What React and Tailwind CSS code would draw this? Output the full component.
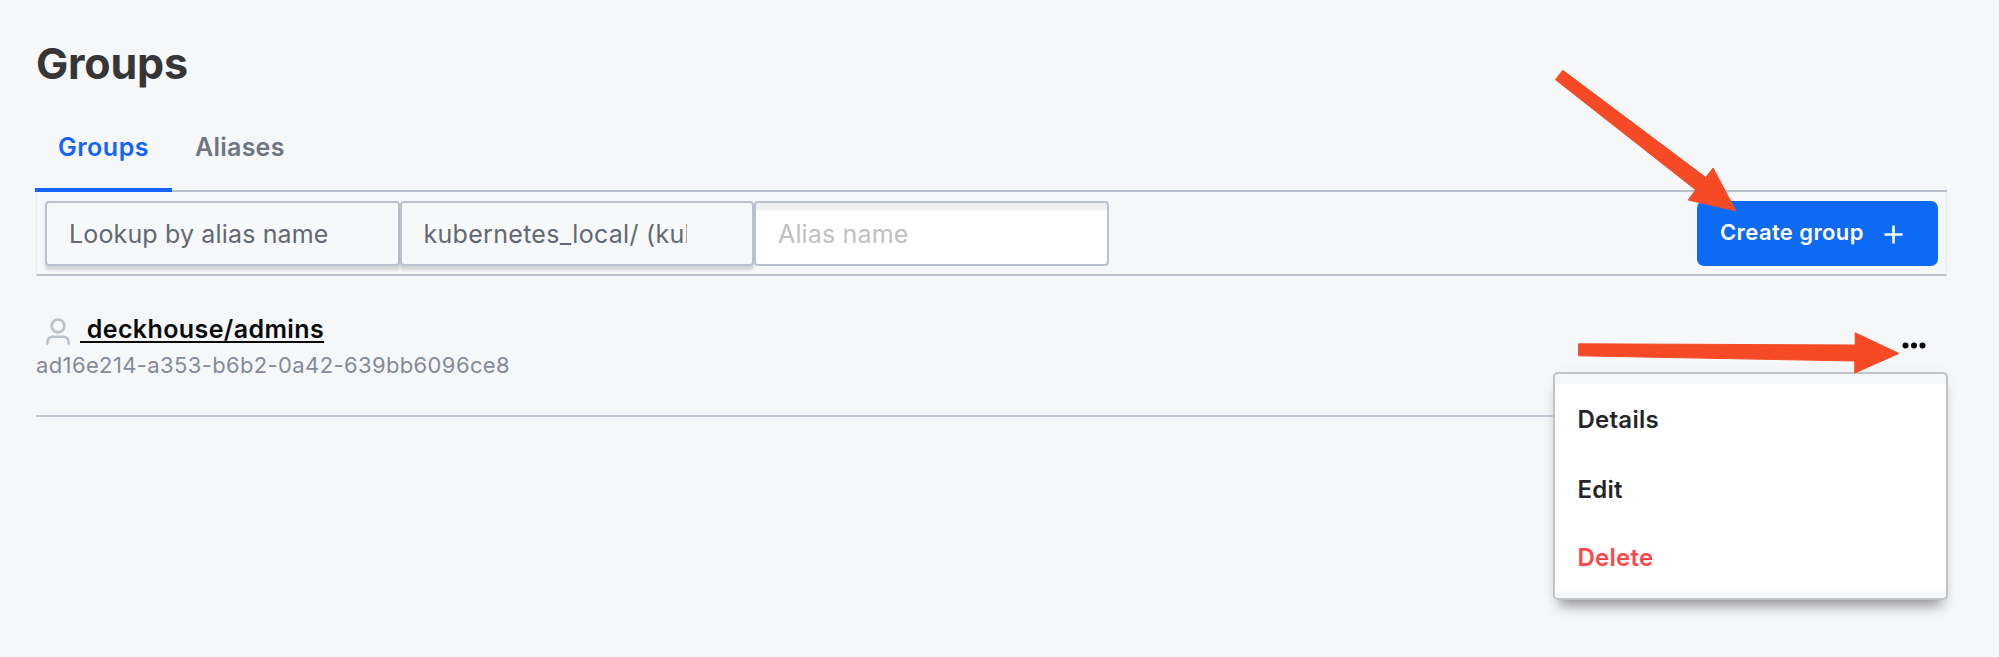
const inputBox =
  "flex h-[65px] w-[354.5px] items-center rounded-[4px] border-2 border-[#bac1cc] px-[22px] pt-[1px] text-[25px] leading-[36px]";

const menuItems = [
  { label: "Details", style: "h-[72px] text-[#25262b]" },
  { label: "Edit", style: "h-[68px] text-[#25262b]" },
  { label: "Delete", style: "h-[68px] text-[#ff4747]" },
];

function UserIcon() {
  return (
    <svg className="ml-[1px] mt-[7px] h-[27px] w-[26px] shrink-0" viewBox="0 0 26 27" fill="none" stroke="#bac1cc" strokeWidth="2.6" strokeLinecap="round">
      <circle cx="13" cy="8" r="6.4" />
      <path d="M2.4 25.6v-1.8a5 5 0 0 1 5-5h11.2a5 5 0 0 1 5 5v1.8" />
    </svg>
  );
}

function Arrows() {
  return (
    <svg className="pointer-events-none absolute left-0 top-0 h-[657px] w-[1999px]" viewBox="0 0 1999 657" fill="#f54a25" stroke="#f54a25" strokeWidth="1" strokeLinejoin="round">
      <path d="M1562.8 70.3 1555.5 79.7 1695.6 189.8 1688.3 200.1 1735.8 210.8 1713.1 168 1705.8 177.4Z" />
      <path d="M1578.6 343.8V355.8L1854.8 361V373L1898.8 353.4 1855.2 332.8V345Z" />
    </svg>
  );
}

export default function App() {
  return (
    <div className="relative h-[657px] w-[1999px] overflow-hidden bg-[#f6f7f9] pl-[36px] pr-[52px] pt-[35px] font-['Inter',sans-serif]">
      <h1 className="h-[71px] text-[43px] font-bold leading-[56px] tracking-[-0.2px] text-[#363636]">Groups</h1>

      <nav className="flex h-[86px] border-b-2 border-[#bac1cc] text-[25px] font-semibold">
        <a className="-mb-[2px] -ml-px flex w-[137px] items-center justify-center border-b-4 border-[#1563ff] pt-[2px] tracking-[0.5px] text-[#1563ff]">Groups</a>
        <a className="-mb-[2px] flex items-center border-b-4 border-transparent pl-[23px] pt-[2px] tracking-[0.25px] text-[#6f7682]">Aliases</a>
      </nav>

      <div className="flex h-[84px] items-start justify-between border-b-2 border-l border-r border-b-[#bac1cc] border-l-[#ebecef] border-r-[#ebecef] pl-[8px] pr-[8px] pt-[9px]">
        <div className="flex">
          <div className={`${inputBox} bg-[#f7f8fa] text-[#636872] shadow-[0_4px_3px_rgba(0,0,0,0.14)]`}>
            <span className="whitespace-nowrap tracking-[0.15px]">Lookup by alias name</span>
          </div>
          <div className={`${inputBox} bg-[#f7f8fa] text-[#636872] shadow-[0_4px_3px_rgba(0,0,0,0.14)]`}>
            <span className="w-[263px] overflow-hidden whitespace-nowrap tracking-[0.3px]">kubernetes_local/ (kubernetes)</span>
          </div>
          <div className={`${inputBox} bg-white text-[#c0c0c0] shadow-[inset_0_7px_0_#f0f0f0]`}>
            <span className="tracking-[0.15px]">Alias name</span>
          </div>
        </div>
        <button className="flex h-[65px] w-[241px] items-center justify-between rounded-[7px] bg-[#0d6af4] pb-[2px] pl-[23px] pr-[35px] text-[22px] font-semibold text-white">
          <span className="whitespace-nowrap tracking-[0.4px]">Create group</span>
          <svg className="mt-[3px] h-[19px] w-[19px]" viewBox="0 0 19 19" stroke="white" strokeWidth="2.6">
            <path d="M9.5 0.5v18M0.5 9.5h18" />
          </svg>
        </button>
      </div>

      <div className="flex h-[141px] justify-between border-b-2 border-[#c0c7d1] pt-[35px]">
        <div>
          <div className="flex h-[37px] items-start pl-[8px]">
            <UserIcon />
            <a className="ml-[9px] whitespace-pre text-[25px] font-semibold leading-[36px] tracking-[0.4px] text-[#0b0b0c] underline decoration-2 underline-offset-[3px]">{" deckhouse/admins"}</a>
          </div>
          <p className="text-[22px] leading-[34px] tracking-[0.37px] text-[#848a98]">ad16e214-a353-b6b2-0a42-639bb6096ce8</p>
        </div>
        <svg className="mr-[21px] mt-[31px] h-[8px] w-[24px]" viewBox="0 0 24 8" fill="#0b0b0c">
          <circle cx="3.5" cy="3.5" r="3" />
          <circle cx="12" cy="3.5" r="3" />
          <circle cx="20.5" cy="3.5" r="3" />
        </svg>
      </div>

      <div className="absolute left-[1553px] top-[372px] h-[228px] w-[395px] rounded-[5px] border-2 border-[#c1c3c6] bg-[#f6f7f9] pb-[7px] pt-[10px] shadow-[0_12px_12px_-6px_rgba(0,0,0,0.38),0_0_14px_rgba(0,0,0,0.04)]">
        <div className="h-full bg-white">
          {menuItems.map((item) => (
            <div key={item.label} className={`flex items-center pl-[22.5px] text-[24px] font-semibold leading-[32px] tracking-[0.25px] ${item.style}`}>
              {item.label}
            </div>
          ))}
        </div>
      </div>

      <Arrows />
    </div>
  );
}
